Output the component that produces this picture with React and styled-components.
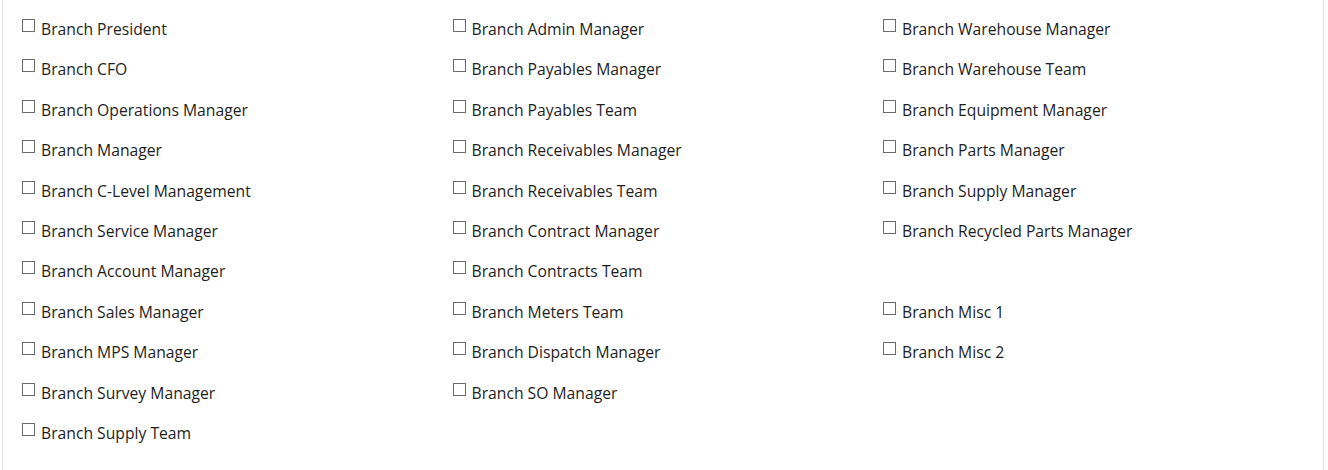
import React from 'react';
import styled, { createGlobalStyle } from 'styled-components';

const GlobalStyle = createGlobalStyle`
  html, body {
    margin: 0;
    padding: 0;
    background: #ffffff;
  }
  body {
    font-family: "Open Sans", "Noto Sans", sans-serif;
  }
`;

const Panel = styled.div`
  box-sizing: border-box;
  margin-left: 2px;
  width: 1322px;
  height: 470px;
  border-left: 1px solid #e3e3e3;
  border-right: 1px solid #e3e3e3;
  background: #fff;
  padding: 18px 0 0 19px;
`;

const Columns = styled.div`
  display: grid;
  grid-template-columns: repeat(3, 430.5px);
`;

const Column = styled.ul`
  list-style: none;
  margin: 0;
  padding: 0;
`;

const Item = styled.li`
  height: 40.4px;
  display: flex;
  align-items: flex-start;
`;

const Label = styled.label`
  display: flex;
  align-items: flex-start;
  gap: 6px;
  font-size: 15.7px;
  line-height: 22px;
  color: #1e1e1e;
  cursor: pointer;
`;

const Box = styled.input.attrs({ type: 'checkbox' })`
  appearance: none;
  -webkit-appearance: none;
  box-sizing: border-box;
  width: 13px;
  height: 13px;
  margin: 0;
  margin-top: 1px;
  border: 1px solid #6b6b6b;
  background: #fff;
  border-radius: 0;
  flex: none;
`;

const columns = [
  [
    'Branch President',
    'Branch CFO',
    'Branch Operations Manager',
    'Branch Manager',
    'Branch C-Level Management',
    'Branch Service Manager',
    'Branch Account Manager',
    'Branch Sales Manager',
    'Branch MPS Manager',
    'Branch Survey Manager',
    'Branch Supply Team',
  ],
  [
    'Branch Admin Manager',
    'Branch Payables Manager',
    'Branch Payables Team',
    'Branch Receivables Manager',
    'Branch Receivables Team',
    'Branch Contract Manager',
    'Branch Contracts Team',
    'Branch Meters Team',
    'Branch Dispatch Manager',
    'Branch SO Manager',
  ],
  [
    'Branch Warehouse Manager',
    'Branch Warehouse Team',
    'Branch Equipment Manager',
    'Branch Parts Manager',
    'Branch Supply Manager',
    'Branch Recycled Parts Manager',
    null,
    'Branch Misc 1',
    'Branch Misc 2',
  ],
];

export default function App() {
  return (
    <>
      <GlobalStyle />
      <Panel>
        <Columns>
          {columns.map((col, ci) => (
            <Column key={ci}>
              {col.map((role, ri) => (
                <Item key={ri}>
                  {role && (
                    <Label>
                      <Box />
                      {role}
                    </Label>
                  )}
                </Item>
              ))}
            </Column>
          ))}
        </Columns>
      </Panel>
    </>
  );
}
